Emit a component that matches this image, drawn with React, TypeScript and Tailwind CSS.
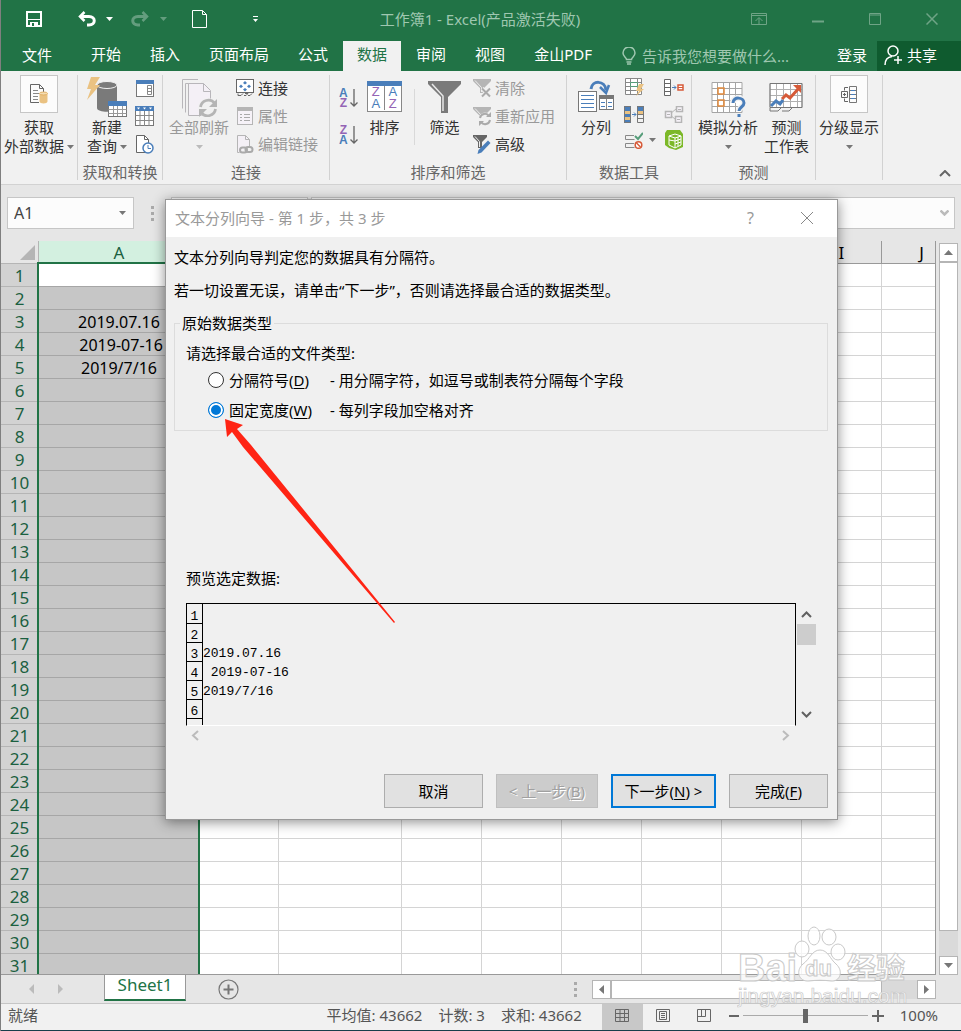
import React, { useState } from "react";

// columns B to H lie under the wizard, so they carry no caption
const columns = [
  { id: "A", caption: "A" },
  { id: "B", caption: "" },
  { id: "C", caption: "" },
  { id: "D", caption: "" },
  { id: "E", caption: "" },
  { id: "F", caption: "" },
  { id: "G", caption: "" },
  { id: "H", caption: "" },
  { id: "I", caption: "I" },
  { id: "J", caption: "J" },
];
const rows = Array.from({ length: 31 }, (_, i) => i + 1);
const cellData: Record<number, string> = {
  3: "2019.07.16",
  4: " 2019-07-16",
  5: "2019/7/16",
};

/* ---------- small shared pieces ---------- */

const Caret = ({ className = "fill-[#777]" }: { className?: string }) => (
  <svg width="7" height="4" viewBox="0 0 7 4" className={className}>
    <path d="M0 0h7L3.5 4z" />
  </svg>
);

const Dots = () => (
  <svg width="3" height="15" viewBox="0 0 3 15" fill="#aaa">
    <path d="M0 0h3v3H0zM0 6h3v3H0zM0 12h3v3H0z" />
  </svg>
);

type GroupProps = { label: string; className: string; children: React.ReactNode };

const Group = ({ label, className, children }: GroupProps) => (
  <section className={`flex shrink-0 flex-col border-r border-[#d2d2d2] ${className}`}>
    <div className="flex h-[90px] items-start">{children}</div>
    <div className="h-[15px] text-center leading-[14px] text-[#666]">{label}</div>
  </section>
);

type BigButtonProps = {
  icon: React.ReactNode;
  lines: string[];
  caret?: "inline" | "below";
  disabled?: boolean;
  className?: string;
};

const BigButton = ({ icon, lines, caret, disabled, className = "" }: BigButtonProps) => (
  <button
    type="button"
    disabled={disabled}
    className={`flex shrink-0 flex-col items-center leading-[19px] whitespace-nowrap text-[#333] disabled:text-[#999] ${className}`}
  >
    <span className="flex h-[43px] items-start justify-center">{icon}</span>
    {lines.map((line, i) => (
      <span key={line} className="flex items-center gap-[3px]">
        {line}
        {caret === "inline" && i === lines.length - 1 && <Caret />}
      </span>
    ))}
    {caret === "below" && (
      <span className="flex h-[19px] items-center">
        <Caret className={disabled ? "fill-[#bbb]" : "fill-[#777]"} />
      </span>
    )}
  </button>
);

type SmallButtonProps = { icon: React.ReactNode; label: string; disabled?: boolean };

const SmallButton = ({ icon, label, disabled }: SmallButtonProps) => (
  <button
    type="button"
    disabled={disabled}
    className="flex h-7 items-center gap-1 pb-[2px] whitespace-nowrap text-[#333] disabled:text-[#999]"
  >
    {icon}
    {label}
  </button>
);

type IconButtonProps = { label: string; className?: string; children: React.ReactNode };

const IconButton = ({ label, className = "", children }: IconButtonProps) => (
  <button type="button" aria-label={label} className={`flex items-center ${className}`}>
    {children}
  </button>
);

/* ---------- ribbon icons ---------- */

const ExternalDataIcon = () => (
  <span className="flex size-[38px] items-center justify-center border border-[#c6c6c6] bg-[#fcfcfc]">
    <svg width="18" height="20" viewBox="0 0 18 20" fill="none">
      <path d="M9 18.500H.5V.5h9l4 4V8M9.500 .5v4h4" stroke="#666" />
      <path d="M3 6.500h5M3 9.500h6M3 12.500h5M3 15.500h5" stroke="#888" />
      <path d="M9.500 9.500v8c0 2.500 8 2.500 8 0v-8z" fill="#eac282" />
      <ellipse cx="13.500" cy="9.500" rx="4" ry="1.500" fill="#f4dcb2" stroke="#e2b063" />
    </svg>
  </span>
);

const NewQueryIcon = () => (
  <svg width="42" height="42" viewBox="0 0 42 42" className="shrink-0">
    <path d="M11 10v23c0 5 20 5 20 0V10z" fill="#7a7a7a" />
    <ellipse cx="21" cy="10" rx="10" ry="3.500" fill="#7a7a7a" stroke="#f1f1f1" />
    <path d="M5 2h9l-5 8h5L1 25l4-11H1z" fill="#eac282" />
    <rect x="22.500" y="26.500" width="18" height="15" fill="#fff" stroke="#777" />
    <path d="M22 26h19v5H22z" fill="#4a7eba" />
    <path d="M22.500 34.500h18M22.500 38.500h18M27.500 31v10M31.500 31v10M36.500 31v10" stroke="#999" />
  </svg>
);

const ShowQueriesIcon = () => (
  <svg width="18" height="17" viewBox="0 0 18 17" fill="none">
    <rect x=".5" y=".5" width="17" height="16" fill="#fff" stroke="#777" />
    <path d="M0 0h18v4H0z" fill="#4a7eba" />
    <path d="M11.500 5.500h4v9h-4z M12 8.500h3M12 11.500h3" stroke="#888" />
  </svg>
);

const FromTableIcon = () => (
  <svg width="19" height="20" viewBox="0 0 19 20" fill="none">
    <rect x=".5" y=".5" width="18" height="19" fill="#fff" stroke="#777" />
    <path d="M0 0h19v5H0z" fill="#4a7eba" />
    <path d="M2 1.500h3l-1.500 2zM8 1.500h3l-1.500 2zM14 1.500h3l-1.500 2z" fill="#fff" />
    <path d="M.5 9.500h18M.5 14.500h18M5 5v15M9.500 5v15M14 5v15" stroke="#888" />
  </svg>
);

const RecentIcon = () => (
  <svg width="19" height="20" viewBox="0 0 19 20" fill="none">
    <path d="M1.500 1.500h8l4 4v13h-12z" fill="#fff" stroke="#666" />
    <path d="M9.500 1.500v4h4" stroke="#666" />
    <circle cx="13" cy="14" r="5" fill="#fff" stroke="#4a7eba" strokeWidth="1.500" />
    <path d="M13 11v3.500h3" stroke="#4a7eba" />
  </svg>
);

const RefreshAllIcon = () => (
  <svg width="37" height="42" viewBox="0 0 37 42" fill="none" stroke="#b8b6ba">
    <path d="M17 4.500H1.500v29M20 8.500H4.500v29" fill="none" />
    <path d="M7.500 8.500h15l7 7v25h-22z" fill="#f4f0f6" />
    <path d="M22.500 8.500v8h7" />
    <circle cx="27" cy="33" r="10" fill="#f1f1f1" stroke="none" />
    <g strokeWidth="2.800" stroke="#b5b5b5">
      <path d="M19.500 32a8 8 0 0 1 14-4M34.500 34a8 8 0 0 1-14 4" />
    </g>
    <path d="M36 24v8h-8zM18 42v-8h8z" fill="#b5b5b5" stroke="none" />
  </svg>
);

const ConnectionsIcon = () => (
  <svg width="18" height="18" viewBox="0 0 18 18" fill="none">
    <rect x=".5" y=".5" width="17" height="13" fill="#fff" stroke="#666" />
    <path d="M9 2l2 2-2 1.500L7 4zM9 9l2 1.500-2 2-2-2zM5 5.500l2 2-2 1.500-2-1.500zM13 5.500l2 2-2 1.500-2-1.500z" fill="#4a7eba" />
    <path d="M2 14.500v2h3l2-2M9 14.500h3l-2 2H8M12 16.500h2l2-2" stroke="#666" />
  </svg>
);

const PropertiesIcon = () => (
  <svg width="18" height="18" viewBox="0 0 18 18" fill="none">
    <rect x="1.500" y=".5" width="15" height="17" fill="#f6f2f8" stroke="#b5b5b5" />
    <path d="M1 0h16v4H1z" fill="#b5b5b5" />
    <path d="M4 7.500h2M8 7.500h6M4 10.500h2M8 10.500h6M4 13.500h2M8 13.500h6" stroke="#aaa" />
  </svg>
);

const EditLinksIcon = () => (
  <svg width="18" height="19" viewBox="0 0 18 19" fill="none">
    <path d="M1.500 17.500V.5h8l4 4v8" fill="#f4f0f6" stroke="#b5b5b5" />
    <path d="M9.500 .5v4h4M1.500 17.500h2" stroke="#b5b5b5" />
    <g stroke="#aaa" strokeWidth="2">
      <rect x="4" y="12.500" width="7" height="5" rx="2.500" />
      <rect x="9.500" y="12" width="7" height="5" rx="2.500" />
    </g>
  </svg>
);

const SortArrowIcon = ({ top, bottom }: { top: string; bottom: string }) => (
  <span className="flex items-center gap-px">
    <span className="flex flex-col font-[Liberation_Sans] text-[12px] leading-[10px] font-bold">
      <span className={top === "A" ? "text-[#4a7eba]" : "text-[#9464b5]"}>{top}</span>
      <span className={bottom === "A" ? "text-[#4a7eba]" : "text-[#9464b5]"}>{bottom}</span>
    </span>
    <svg width="9" height="18" viewBox="0 0 9 18" fill="none" stroke="#666" strokeWidth="1.300">
      <path d="M5 0v17M1.500 13.500L5 17l3.500-3.500" />
    </svg>
  </span>
);

const SortIcon = () => (
  <span className="mt-[6px] flex w-[35px] flex-col border border-t-0 border-[#888] bg-white font-[Liberation_Sans] text-[13px] leading-[12px]">
    <span className="-mx-px h-[5px] bg-[#4a7eba]" />
    <span className="grid grid-cols-2 divide-x divide-[#888] pb-px text-center">
      <span className="flex flex-col">
        <span className="text-[#9464b5]">Z</span>
        <span className="text-[#4a7eba]">A</span>
      </span>
      <span className="flex flex-col">
        <span className="text-[#4a7eba]">A</span>
        <span className="text-[#9464b5]">Z</span>
      </span>
    </span>
  </span>
);

const FilterIcon = () => (
  <svg width="33" height="39" viewBox="0 0 33 39">
    <path d="M0 6h33v3L20 22v16h-7V22L0 9z" fill="#7a7a7a" />
    <path d="M4 9l11 12v15" fill="none" stroke="#e8e8e8" strokeWidth="1.500" />
  </svg>
);

const Funnel = ({ color }: { color: string }) => (
  <>
    <path d="M0 0h18v2l-7 7v5H7V9L0 2z" fill={color} />
    <path d="M2 1.500l6.500 7V13" fill="none" stroke="#eee" />
  </>
);

const ClearIcon = () => (
  <svg width="18" height="19" viewBox="0 0 18 19">
    <Funnel color="#b5b5b5" />
    <path d="M9 9.500l8 8M17 9.500l-8 8" stroke="#f1f1f1" strokeWidth="4" />
    <path d="M9 9.500l8 8M17 9.500l-8 8" stroke="#aaa" strokeWidth="2" />
  </svg>
);

const ReapplyIcon = () => (
  <svg width="18" height="19" viewBox="0 0 18 19" fill="none">
    <Funnel color="#b5b5b5" />
    <circle cx="12" cy="12" r="6.500" fill="#f1f1f1" />
    <path d="M7 11a5 5 0 0 1 9-2M17 13a5 5 0 0 1-9 2" stroke="#aaa" strokeWidth="2" />
    <path d="M18 5v5h-5zM6 19v-5h5z" fill="#aaa" />
  </svg>
);

const AdvancedIcon = () => (
  <svg width="18" height="19" viewBox="0 0 18 19">
    <path d="M0 0h14v2L9 7v6H5V7L0 2z" fill="#666" />
    <path d="M2 1.500l4.500 5V12" fill="none" stroke="#eee" />
    <path d="M5.500 15L15 5.500l2.500 2.500L8.500 17.500 4.500 19z" fill="#4a7eba" />
  </svg>
);

const TextToColumnsIcon = () => (
  <svg width="36" height="39" viewBox="0 0 36 39" fill="none">
    <rect x=".5" y="16.500" width="18" height="20" fill="#fff" stroke="#777" />
    <path d="M3 20.500h13M3 24.500h13M3 28.500h13M3 32.500h13" stroke="#4a7eba" />
    <rect x="21.500" y="20.500" width="14" height="14" fill="#fff" stroke="#777" />
    <path d="M21 20h15v4H21z" fill="#777" />
    <path d="M28.500 24v10" stroke="#888" />
    <path d="M23 27.500h4M23 31.500h4M30 27.500h4M30 31.500h4" stroke="#4a7eba" />
    <path d="M13 14c1-9 14-9 15 1" stroke="#4a7eba" strokeWidth="3" />
    <path d="M22 12l6 6 3-8" stroke="#4a7eba" strokeWidth="2.500" />
  </svg>
);

const FlashFillIcon = () => (
  <svg width="20" height="18" viewBox="0 0 20 18" fill="none">
    <path d="M1.500 .5h16v16h-16zM1.500 4.500h16M1.500 8.500h16M1.500 12.500h16M6.500 .5v16M13.500 .5v16" fill="#fff" stroke="#888" />
    <path d="M6.500 4.500h7v4h-7z" fill="#fff" stroke="#569d7a" />
    <path d="M15 6h5l-3 5h3l-8 7 3-5h-3z" fill="#eac282" />
  </svg>
);

const RemoveDuplicatesIcon = () => (
  <svg width="20" height="17" viewBox="0 0 20 17" fill="none">
    <path d="M0 0h7v17H0zM13 0h7v5h-7z" fill="#4a7eba" />
    <path d="M1 5h5v3H1zM1 11h5v3H1zM14 5h5v3h-5z" fill="#eac282" />
    <path d="M13.500 .5h6v16h-6zM13.500 8.500h6M13.500 12.500h6M.5 .5h6v16h-6z" stroke="#777" />
    <path d="M8 8.500h4M10 6.500l2 2-2 2" stroke="#4a7eba" />
  </svg>
);

const ValidationIcon = () => (
  <svg width="19" height="17" viewBox="0 0 19 17" fill="none">
    <path d="M10 3.500H1.500v4h9M10 11.500H1.500v4h9" stroke="#888" />
    <path d="M11 4l3 3 5-6" stroke="#569d7a" strokeWidth="2" />
    <circle cx="14.500" cy="13" r="3.300" fill="#fff" stroke="#d65a38" strokeWidth="1.500" />
    <path d="M12.500 11l4 4" stroke="#d65a38" strokeWidth="1.500" />
  </svg>
);

const ConsolidateIcon = () => (
  <svg width="20" height="17" viewBox="0 0 20 17" fill="none">
    <path d="M.5 .5h6v16h-6zM.5 4.500h6M.5 8.500h6M.5 12.500h6" fill="#fff" stroke="#666" />
    <path d="M8 8.500h4M10 6.500l2 2-2 2" stroke="#4a7eba" />
    <path d="M14 6h5v5h-5z" fill="#fff" stroke="#d65a38" strokeWidth="1.500" />
    <path d="M14 8.500h5" stroke="#d65a38" />
  </svg>
);

const RelationshipsIcon = () => (
  <svg width="20" height="17" viewBox="0 0 20 17" fill="none" stroke="#b5b5b5">
    <path d="M6 8l6-5M6 9l5 4" />
    <path d="M1.500 5.500h6v6h-6zM12.500 .5h6v5h-6zM11.500 10.500h6v6h-6z" fill="#f6f2f8" strokeWidth="1.500" />
    <path d="M3 8.500h3M14 3.500h3M13 13.500h3" />
  </svg>
);

const DataModelIcon = () => (
  <svg width="20" height="20" viewBox="0 0 20 20" fill="none">
    <path d="M3 0h13l3 4v13l-7 3-7-2-4-3V3z" fill="#7cb828" />
    <path d="M5 6l6-2 6 2v9l-6 3-6-3zM11 8v10M5 6l6 2 6-2M14 7v9M11 11l6-2M11 14l6-2M5 10l6 1" stroke="#fff" />
  </svg>
);

const WhatIfIcon = () => (
  <svg width="35" height="42" viewBox="0 0 35 42" fill="none">
    <path d="M1 7.500h30v30H1zM1 13.500h30M1 19.500h30M1 25.500h30M1 31.500h30M6.500 7.500v30M12.500 7.500v30M18.500 7.500v30M24.500 7.500v30" fill="#fff" stroke="#a5a5a5" />
    <path d="M7 13h6v6H7zM7 25h6v6H7z" stroke="#e28a3d" strokeWidth="1.500" />
    <path d="M22 28c0-7 11-6 11 0 0 4-5 4-5 8" stroke="#f1f1f1" strokeWidth="6" />
    <path d="M22 28c0-7 11-6 11 0 0 4-5 4-5 8M28 39v3" stroke="#4a7eba" strokeWidth="3" />
  </svg>
);

const ForecastIcon = () => (
  <svg width="35" height="38" viewBox="0 0 35 38" fill="none">
    <path d="M1 8.500h32v24H1zM1 14.500h32M1 20.500h32M1 26.500h32M7.500 8.500v24M14.500 8.500v24M21.500 8.500v24M28.500 8.500v24" fill="#fff" stroke="#b0b0b0" />
    <path d="M1 8.500h32v24H1zM1 33v3h8l3-3M13 36h7l3-3" stroke="#777" />
    <path d="M2 31l5-5 4 3 3-4" stroke="#4a7eba" strokeWidth="3" />
    <path d="M13 24l4-4 4 3 9-10" stroke="#d65a38" strokeWidth="3" />
    <path d="M24 10h8v8z" fill="#d65a38" />
  </svg>
);

const OutlineIcon = () => (
  <span className="flex size-[38px] items-center justify-center border border-[#c6c6c6] bg-[#fcfcfc]">
    <svg width="17" height="17" viewBox="0 0 17 17" fill="none">
      <path d="M8.500 .5h7v16h-7zM8.500 4.500h7M8.500 8.500h7M8.500 12.500h7" stroke="#777" />
      <path d="M10 4.500h4M10 8.500h4M10 12.500h4" stroke="#4a7eba" />
      <path d="M7 1.500H3.500v3M7 15.500H3.500v-3M.5 5.500h6v6h-6zM2 8.500h3M3.500 7v3" stroke="#666" />
    </svg>
  </span>
);

/* ---------- window sections ---------- */

const TitleBar = () => (
  <header className="flex h-[41px] items-center bg-[#217346] pb-[3px] text-white">
    <div className="flex flex-1 items-center pl-[25px]">
      <IconButton label="保存">
        <svg width="16" height="16" viewBox="0 0 16 16" fill="none" stroke="#fff">
          <path d="M1 1h14v14H1z" strokeWidth="2" />
          <path d="M2 8.500h12" />
          <path d="M4 11h8v5H4z" fill="#fff" stroke="none" />
          <path d="M6 12h2v3H6z" fill="#217346" stroke="none" />
        </svg>
      </IconButton>
      <IconButton label="撤消" className="ml-9 gap-[10px]">
        <svg width="18" height="16" viewBox="0 0 18 16" fill="none" stroke="#fff">
          <path d="M3 5.500h8c7 0 7 8.500 0 8.500H9" strokeWidth="3" />
          <path d="M6.500 1L2 5.500 6.500 10" strokeWidth="2.500" />
        </svg>
        <Caret className="fill-white" />
      </IconButton>
      <IconButton label="恢复" className="ml-[18px] gap-[11px] opacity-30">
        <svg width="18" height="16" viewBox="0 0 18 16" fill="none" stroke="#fff">
          <path d="M15 5.500H7c-7 0-7 8.500 0 8.500h2" strokeWidth="3" />
          <path d="M11.500 1L16 5.500 11.500 10" strokeWidth="2.500" />
        </svg>
        <Caret className="fill-white" />
      </IconButton>
      <IconButton label="新建" className="ml-[25px]">
        <svg width="15" height="18" viewBox="0 0 15 18" fill="none" stroke="#fff">
          <path d="M.5 .5h10l4 4v13H.5zM10.500 .5v4h4" />
        </svg>
      </IconButton>
      <IconButton label="自定义快速访问工具栏" className="ml-[46px]">
        <svg width="5" height="6" viewBox="0 0 5 6" fill="#fff">
          <path d="M0 0h5v1H0zM0 3h5L2.500 6z" />
        </svg>
      </IconButton>
    </div>
    <h1 className="mr-1 text-[#9fc7b0]">工作簿1 - Excel(产品激活失败)</h1>
    <div className="flex flex-1 items-center justify-end gap-[45px] pr-[23px]">
      <IconButton label="功能区显示选项">
        <svg width="16" height="12" viewBox="0 0 16 12" fill="none" stroke="#6fa486">
          <path d="M.5 .5h15v11H.5zM.5 2.500h15M8 11V5M4.500 8L8 4.500 11.500 8" />
        </svg>
      </IconButton>
      <IconButton label="最小化">
        <svg width="12" height="12" viewBox="0 0 12 12" stroke="#6fa486">
          <path d="M0 8.500h12" strokeWidth="2" />
        </svg>
      </IconButton>
      <IconButton label="最大化">
        <svg width="12" height="12" viewBox="0 0 12 12" fill="none" stroke="#6fa486">
          <path d="M.5 .5h11v11H.5zM.5 2h11" />
        </svg>
      </IconButton>
      <IconButton label="关闭">
        <svg width="12" height="12" viewBox="0 0 12 12" stroke="#6fa486" strokeWidth="1.500">
          <path d="M.5 .5l11 11M11.500 .5l-11 11" />
        </svg>
      </IconButton>
    </div>
  </header>
);

const tabs = ["开始", "插入", "页面布局", "公式", "数据", "审阅", "视图", "金山PDF"];

const TabBar = () => (
  <nav className="flex h-[30px] items-stretch bg-[#217346] whitespace-nowrap text-white">
    <button type="button" className="mr-[25px] pb-[2px] pl-[21px]">
      文件
    </button>
    <div className="flex gap-px">
      {tabs.map((tab) => (
        <button
          key={tab}
          type="button"
          className={
            tab === "数据" ? "bg-[#f1f1f1] px-[14px] pb-[3px] text-[#217346]" : "px-[14px] pb-[3px]"
          }
        >
          {tab}
        </button>
      ))}
    </div>
    <button type="button" className="ml-4 flex items-center gap-[6px] text-[#9fc7b0]">
      <svg width="14" height="18" viewBox="0 0 14 18" fill="none" stroke="#9fc7b0" strokeWidth="1.500">
        <path d="M4.500 12.500c0-2-3.500-3-3.500-6.500a6 6 0 0 1 12 0c0 3.500-3.500 4.500-3.500 6.500zM4.500 15h5M5 17h4" />
      </svg>
      告诉我您想要做什么...
    </button>
    <div className="flex flex-1 justify-end">
      <button type="button" className="px-[10px] pb-[2px]">
        登录
      </button>
      <button type="button" className="flex w-[84px] items-center gap-1 bg-[#0f5b2f] pb-[2px] pl-[7px]">
        <svg width="19" height="20" viewBox="0 0 19 20" fill="none" stroke="#fff" strokeWidth="1.500">
          <circle cx="9" cy="6" r="5" />
          <path d="M1 20c0-5 3-8 7-8.500M14 11v8M10 15h8" />
        </svg>
        共享
      </button>
    </div>
  </nav>
);

const Ribbon = () => (
  <div className="flex border-b border-[#d2d2d2] bg-[#f1f1f1] py-1">
    <Group label="" className="w-[77px]">
      <BigButton
        icon={<ExternalDataIcon />}
        lines={["获取", "外部数据"]}
        caret="inline"
        className="ml-[3px]"
      />
    </Group>
    <Group label="获取和转换" className="w-[85px]">
      <BigButton icon={<NewQueryIcon />} lines={["新建", "查询"]} caret="inline" className="ml-2 w-[42px]" />
      <div className="ml-[7px] flex flex-col items-center">
        <IconButton label="显示查询" className="h-7 pb-[2px]">
          <ShowQueriesIcon />
        </IconButton>
        <IconButton label="从表格" className="h-7 pb-[2px]">
          <FromTableIcon />
        </IconButton>
        <IconButton label="最近使用的源" className="h-7 pb-[2px]">
          <RecentIcon />
        </IconButton>
      </div>
    </Group>
    <Group label="连接" className="w-[167px]">
      <BigButton icon={<RefreshAllIcon />} lines={["全部刷新"]} caret="below" disabled className="ml-[6px]" />
      <div className="ml-[7px] flex flex-col items-start">
        <SmallButton icon={<ConnectionsIcon />} label="连接" />
        <SmallButton icon={<PropertiesIcon />} label="属性" disabled />
        <SmallButton icon={<EditLinksIcon />} label="编辑链接" disabled />
      </div>
    </Group>
    <Group label="排序和筛选" className="w-[237px]">
      <div className="ml-[9px] flex w-[18px] flex-col gap-[17px] pt-[13px]">
        <IconButton label="升序">
          <SortArrowIcon top="A" bottom="Z" />
        </IconButton>
        <IconButton label="降序">
          <SortArrowIcon top="Z" bottom="A" />
        </IconButton>
      </div>
      <BigButton icon={<SortIcon />} lines={["排序"]} className="ml-[10px] w-[35px]" />
      <div className="mt-[14px] ml-3 h-14 border-l border-[#d9d9d9]" />
      <BigButton icon={<FilterIcon />} lines={["筛选"]} className="ml-[13px] w-[33px]" />
      <div className="ml-3 flex flex-col items-start">
        <SmallButton icon={<ClearIcon />} label="清除" disabled />
        <SmallButton icon={<ReapplyIcon />} label="重新应用" disabled />
        <SmallButton icon={<AdvancedIcon />} label="高级" />
      </div>
    </Group>
    <Group label="数据工具" className="w-[125px]">
      <BigButton icon={<TextToColumnsIcon />} lines={["分列"]} className="ml-[11px] w-9" />
      <div className="ml-[10px] flex w-8 flex-col">
        <IconButton label="快速填充" className="h-[26px] pb-[2px]">
          <FlashFillIcon />
        </IconButton>
        <IconButton label="删除重复项" className="h-[26px]">
          <RemoveDuplicatesIcon />
        </IconButton>
        <IconButton label="数据验证" className="h-[26px] gap-[6px]">
          <ValidationIcon />
          <Caret />
        </IconButton>
      </div>
      <div className="ml-2 flex flex-col">
        <IconButton label="合并计算" className="h-[26px] pb-[2px]">
          <ConsolidateIcon />
        </IconButton>
        <IconButton label="关系" className="h-[26px]">
          <RelationshipsIcon />
        </IconButton>
        <IconButton label="管理数据模型" className="h-[26px]">
          <DataModelIcon />
        </IconButton>
      </div>
    </Group>
    <Group label="预测" className="w-[124px]">
      <BigButton icon={<WhatIfIcon />} lines={["模拟分析"]} caret="below" className="ml-[6px]" />
      <BigButton icon={<ForecastIcon />} lines={["预测", "工作表"]} className="ml-[6px]" />
    </Group>
    <Group label="" className="w-[67px]">
      <BigButton icon={<OutlineIcon />} lines={["分级显示"]} caret="below" className="ml-[3px]" />
    </Group>
    <div className="flex flex-1 items-end justify-end pr-[10px] pb-[3px]">
      <IconButton label="折叠功能区">
        <svg width="12" height="7" viewBox="0 0 12 7" fill="none" stroke="#666" strokeWidth="2">
          <path d="M1 6l5-5 5 5" />
        </svg>
      </IconButton>
    </div>
  </div>
);

const FormulaBar = () => (
  <div className="flex h-14 items-center bg-[#e6e6e6] px-[6px]">
    <div className="flex h-8 w-[127px] items-center border border-[#c6c6c6] bg-[#fcfcfc] pr-[7px] pl-[6px]">
      <input aria-label="名称框" defaultValue="A1" className="min-w-0 flex-1 text-base text-[#444] outline-none" />
      <Caret className="fill-[#777]" />
    </div>
    <div className="ml-[17px] flex w-5 items-center">
      <Dots />
    </div>
    <div className="h-8 w-[137px] border border-[#c6c6c6] bg-[#fcfcfc]" />
    <div className="ml-[3px] flex h-8 flex-1 items-center border border-[#c6c6c6] bg-[#fcfcfc] pr-[5px]">
      <input aria-label="编辑栏" className="min-w-0 flex-1 outline-none" />
      <svg width="9" height="6" viewBox="0 0 9 6" fill="none" stroke="#bbb" strokeWidth="2.500">
        <path d="M.5 .5l4 4 4-4" />
      </svg>
    </div>
  </div>
);

const Sheet = () => (
  <div className="flex min-h-0 flex-1 bg-[#e6e6e6]">
    <div className="relative min-w-0 flex-1 overflow-hidden border-r border-b border-[#999] bg-white">
      <table className="w-[961px] table-fixed border-separate border-spacing-0 text-base leading-[20px]">
        <colgroup>
          <col className="w-[38px]" />
          <col className="w-[160px]" />
          <col className="w-[80px]" />
          <col className="w-[123px]" />
          {columns.slice(3).map((c) => (
            <col key={c.id} className="w-[80px]" />
          ))}
        </colgroup>
        <thead>
          <tr className="h-[23px] bg-[#e6e6e6]">
            <th className="border-r border-b border-[#b5b5b5] p-0">
              <svg width="15" height="15" viewBox="0 0 15 15" className="mr-[3px] ml-auto fill-[#b5b5b5]">
                <path d="M15 0v15H0z" />
              </svg>
            </th>
            {columns.map((c) => (
              <th
                key={c.id}
                className={
                  c.id === "A"
                    ? "border-b border-[#999] bg-[#d3f0e0] p-0 pt-[2px] text-[17px] font-normal text-[#1b6040]"
                    : "border-r border-b border-[#999] p-0 pt-[2px] text-[17px] font-normal text-black"
                }
              >
                {c.caption}
              </th>
            ))}
          </tr>
        </thead>
        <tbody>
          {rows.map((r) => (
            <tr key={r} className="h-[23px]">
              <th className="border-r border-b border-[#b5b5b5] bg-[#d2d2d2] p-0 pt-[2px] text-[17px] font-normal text-[#1b6040]">
                {r}
              </th>
              {columns.map((c) => (
                <td
                  key={c.id}
                  className={
                    c.id !== "A"
                      ? "border-r border-b border-[#d4d4d4] p-0"
                      : r === 1
                        ? "border-b border-[#a6a6a6] bg-white p-0"
                        : "border-b border-[#a6a6a6] bg-[#c6c6c6] p-0 pt-[2px] text-center whitespace-pre text-black"
                  }
                >
                  {c.id === "A" ? cellData[r] : null}
                </td>
              ))}
            </tr>
          ))}
        </tbody>
      </table>
      {/* selection outline */}
      <div className="pointer-events-none absolute top-[21px] bottom-0 left-9 w-[163px] border-2 border-b-0 border-[#217346]" />
    </div>
    <div className="mx-[3px] mt-[2px] flex w-[19px] flex-col bg-[#dadada]">
      <button type="button" aria-label="向上滚动" className="flex h-[19px] items-center justify-center border border-[#b5b5b5] bg-white">
        <svg width="9" height="5" viewBox="0 0 9 5" fill="#777">
          <path d="M0 5h9L4.500 0z" />
        </svg>
      </button>
      <div className="mb-[25px] flex-1 border border-[#b5b5b5] bg-white" />
      <button type="button" aria-label="向下滚动" className="flex h-[19px] items-center justify-center border border-[#b5b5b5] bg-white">
        <svg width="9" height="5" viewBox="0 0 9 5" fill="#777">
          <path d="M0 0h9L4.500 5z" />
        </svg>
      </button>
    </div>
  </div>
);

const SheetTabs = () => (
  <div className="flex h-[28px] items-center bg-[#e6e6e6]">
    <div className="flex w-[103px] items-center gap-[24px] pl-7">
      <svg width="5" height="10" viewBox="0 0 5 10" fill="#bbb">
        <path d="M5 0v10L0 5z" />
      </svg>
      <svg width="5" height="10" viewBox="0 0 5 10" fill="#bbb">
        <path d="M0 0v10l5-5z" />
      </svg>
    </div>
    <button
      type="button"
      className="h-[26px] w-[82px] self-start border-x border-b-2 border-x-[#999] border-b-[#217346] bg-white pb-1 text-[17px] leading-[20px] text-[#217346]"
    >
      Sheet1
    </button>
    <button type="button" aria-label="新工作表" className="ml-8">
      <svg width="21" height="21" viewBox="0 0 21 21" fill="none" stroke="#777">
        <circle cx="10.500" cy="10.500" r="9.500" strokeWidth="1.200" />
        <path d="M10.500 5.500v10M5.500 10.500h10" strokeWidth="2" />
      </svg>
    </button>
    <div className="flex flex-1 items-center justify-end pr-[25px]">
      <Dots />
      <div className="ml-[15px] flex h-[19px] w-[344px] bg-[#dadada]">
        <button type="button" aria-label="向左滚动" className="flex w-[19px] items-center justify-center border border-[#b5b5b5] bg-white">
          <svg width="5" height="9" viewBox="0 0 5 9" fill="#777">
            <path d="M5 0v9L0 4.500z" />
          </svg>
        </button>
        <div className="mr-[35px] flex-1 border border-[#b5b5b5] bg-white" />
        <button type="button" aria-label="向右滚动" className="flex w-[19px] items-center justify-center border border-[#b5b5b5] bg-white">
          <svg width="5" height="9" viewBox="0 0 5 9" fill="#777">
            <path d="M0 0v9l5-4.500z" />
          </svg>
        </button>
      </div>
    </div>
  </div>
);

const StatusBar = () => (
  <footer className="flex h-[28px] items-center border-t border-b border-t-[#c6c6c6] border-b-[#173f4a] bg-[#f1f1f1] pl-[7px] whitespace-nowrap text-[#555]">
    <div className="flex flex-1 gap-4 pr-5 pb-[3px]">
      <span className="flex-1">就绪</span>
      <span>平均值: 43662</span>
      <span>计数: 3</span>
      <span>求和: 43662</span>
    </div>
    <button type="button" aria-label="普通" className="flex h-full w-[41px] items-center justify-center bg-[#c8c8c8] pb-[3px]">
      <svg width="14" height="13" viewBox="0 0 14 13" fill="none" stroke="#666">
        <path d="M.5 .5h13v12H.5zM.5 4.500h13M.5 8.500h13M5 .5v12M9.500 .5v12" />
      </svg>
    </button>
    <div className="flex items-center pr-[23px] pb-[3px]">
      <button type="button" aria-label="页面布局" className="flex w-[41px] justify-center">
        <svg width="14" height="13" viewBox="0 0 14 13" fill="none" stroke="#666">
          <path d="M.5 .5h13v12H.5zM3.500 2.500h7v8h-7zM5 4.500h4M5 6.500h4M5 8.500h4" />
        </svg>
      </button>
      <button type="button" aria-label="分页预览" className="flex w-[41px] justify-center">
        <svg width="14" height="13" viewBox="0 0 14 13" fill="none" stroke="#666">
          <path d="M.5 .5h13v12H.5zM.5 7.500h8v-7M4.500 .5v7" />
        </svg>
      </button>
      <button type="button" aria-label="缩小" className="ml-1">
        <svg width="10" height="10" viewBox="0 0 10 10" stroke="#666" strokeWidth="2">
          <path d="M0 5h10" />
        </svg>
      </button>
      <input
        type="range"
        aria-label="显示比例"
        min={0}
        max={200}
        defaultValue={100}
        className="mx-1 h-[14px] w-[125px] appearance-none bg-[linear-gradient(#aaa,#aaa)] bg-[length:100%_1px] bg-center bg-no-repeat [&::-webkit-slider-thumb]:h-[14px] [&::-webkit-slider-thumb]:w-[5px] [&::-webkit-slider-thumb]:appearance-none [&::-webkit-slider-thumb]:bg-[#666]"
      />
      <button type="button" aria-label="放大">
        <svg width="12" height="12" viewBox="0 0 12 12" stroke="#666" strokeWidth="2">
          <path d="M0 6h12M6 0v12" />
        </svg>
      </button>
      <span className="ml-4">100%</span>
    </div>
  </footer>
);

/* ---------- wizard dialog ---------- */

const previewRows = [
  { n: 1, text: "" },
  { n: 2, text: "" },
  { n: 3, text: "2019.07.16" },
  { n: 4, text: " 2019-07-16" },
  { n: 5, text: "2019/7/16" },
  { n: 6, text: "" },
];

const dataTypes = [
  { id: "delimited", label: "分隔符号", hotkey: "D", hint: "- 用分隔字符，如逗号或制表符分隔每个字段" },
  { id: "fixed", label: "固定宽度", hotkey: "W", hint: "- 每列字段加空格对齐" },
];

const dialogButton = "h-[34px] border border-[#adadad] bg-[#e1e1e1]";

const WizardDialog = () => {
  const [dataType, setDataType] = useState("fixed");

  return (
    <div
      role="dialog"
      aria-label="文本分列向导"
      className="absolute top-[199px] left-[164px] w-[673px] border border-[#999] bg-[#f0f0f0] leading-[22px] text-black shadow-[0_2px_12px_rgba(0,0,0,0.45)]"
    >
      <div className="flex h-[37px] items-center bg-white pr-[23px] pb-[2px] pl-[9px] text-[#999]">
        <h2 className="flex-1">文本分列向导 - 第 1 步，共 3 步</h2>
        <button type="button" aria-label="帮助" className="mr-[46px] text-base">
          ?
        </button>
        <button type="button" aria-label="关闭对话框">
          <svg width="14" height="14" viewBox="0 0 14 14" stroke="#888">
            <path d="M1 1l12 12M13 1L1 13" />
          </svg>
        </button>
      </div>

      <div className="pt-[9px] pr-[9px] pb-[11px] pl-2">
        <p>文本分列向导判定您的数据具有分隔符。</p>
        <p className="mt-[11px]">若一切设置无误，请单击“下一步”，否则请选择最合适的数据类型。</p>

        <fieldset className="mt-[11px] border border-[#dcdcdc] pb-[9px] pl-[5px]">
          <legend className="px-[2px]">原始数据类型</legend>
          <div className="mt-2 pl-[6px]">
            <p>请选择最合适的文件类型:</p>
            {dataTypes.map((t, i) => (
              <div key={t.id} className={i === 0 ? "mt-[5px] flex pl-[22px]" : "mt-2 flex pl-[22px]"}>
                <label className="flex w-[122px] items-center gap-[5px]">
                  <input
                    type="radio"
                    name="dataType"
                    checked={dataType === t.id}
                    onChange={() => setDataType(t.id)}
                    className="size-4 appearance-none rounded-full border border-[#333] bg-white checked:border-[#0078d7] checked:bg-[#0078d7] checked:shadow-[inset_0_0_0_2px_white]"
                  />
                  <span>
                    {t.label}(<u className="underline-offset-2">{t.hotkey}</u>)
                  </span>
                </label>
                <span>{t.hint}</span>
              </div>
            ))}
          </div>
        </fieldset>

        <p className="mt-[136px] pl-3">预览选定数据:</p>
        <div className="mt-[14px] flex pl-3">
          <div className="h-[123px] w-[610px] overflow-hidden border border-black border-b-white font-[Liberation_Mono,monospace] text-[13px]">
            <table className="w-full border-separate border-spacing-0">
              <tbody>
                {previewRows.map((row) => (
                  <tr key={row.n} className="h-[19px] first:h-5">
                    <th className="w-4 border-r border-b border-black p-0 align-bottom leading-[12px] font-normal">
                      {row.n}
                    </th>
                    <td className="p-0 pt-[2px] leading-[17px] whitespace-pre">{row.text}</td>
                  </tr>
                ))}
                <tr className="h-[19px]">
                  <th className="border-r border-black p-0" />
                  <td className="p-0" />
                </tr>
              </tbody>
            </table>
          </div>
          <div className="ml-px flex w-[19px] flex-col items-center pt-2">
            <svg width="11" height="7" viewBox="0 0 11 7" fill="none" stroke="#606060" strokeWidth="2">
              <path d="M1 6l4.500-4.500L10 6" />
            </svg>
            <div className="mt-[6px] h-[21px] w-full bg-[#cdcdcd]" />
            <svg width="11" height="7" viewBox="0 0 11 7" fill="none" stroke="#606060" strokeWidth="2" className="mt-auto mb-2">
              <path d="M1 1l4.500 4.500L10 1" />
            </svg>
          </div>
        </div>
        <div className="mt-1 flex w-[616px] justify-between pl-[17px]">
          <svg width="8" height="11" viewBox="0 0 8 11" fill="none" stroke="#bbb" strokeWidth="2">
            <path d="M7 1L2 5.500 7 10" />
          </svg>
          <svg width="8" height="11" viewBox="0 0 8 11" fill="none" stroke="#bbb" strokeWidth="2">
            <path d="M1 1l5 4.500L1 10" />
          </svg>
        </div>

        <div className="mt-[33px] flex justify-end gap-[13px]">
          <button type="button" className={`w-[99px] ${dialogButton}`}>
            取消
          </button>
          <button
            type="button"
            disabled
            className="h-[34px] w-[102px] border border-[#bfbfbf] bg-[#ccc] text-[#a0a0a0] text-shadow-[1px_1px_0_#fff]"
          >
            &lt; 上一步(<u className="underline-offset-2">B</u>)
          </button>
          <button type="button" className="h-[34px] w-[105px] border-2 border-[#0078d7] bg-[#e1e1e1]">
            下一步(<u className="underline-offset-2">N</u>) &gt;
          </button>
          <button type="button" className={`w-[99px] ${dialogButton}`}>
            完成(<u className="underline-offset-2">F</u>)
          </button>
        </div>
      </div>

      {/* arrow that points at the chosen radio */}
      <svg
        width="172"
        height="206"
        viewBox="0 0 172 206"
        className="pointer-events-none absolute top-[218px] left-[58px]"
      >
        <path d="M1 1l18 6-6 4 14 16 144 177-1 1L19 29 8 14l-5 5z" fill="#ff2414" />
      </svg>
    </div>
  );
};

const Watermark = () => (
  <svg
    width="180"
    height="86"
    viewBox="0 0 180 86"
    className="pointer-events-none absolute right-[44px] bottom-[20px]"
    fill="rgba(255,255,255,0.75)"
    stroke="#c9c9c9"
    fontFamily="Liberation Sans, Noto Sans CJK SC, sans-serif"
  >
    <ellipse cx="65" cy="24" rx="7" ry="8" />
    <ellipse cx="77" cy="11" rx="6" ry="9" />
    <ellipse cx="92" cy="12" rx="7" ry="8" />
    <ellipse cx="101" cy="27" rx="7" ry="8" />
    <path d="M83 25c8 0 10 9 16 14 8 7 4 18-5 17-8-1-14-1-22 0-10 1-14-10-6-17 7-5 9-14 17-14z" />
    <text x="1" y="56" fontSize="38" fontWeight="bold">
      Bai
    </text>
    <text x="68" y="51" fontSize="22" fontWeight="bold">
      du
    </text>
    <text x="110" y="54" fontSize="29" fontWeight="bold">
      经验
    </text>
    <text x="1" y="78" fontSize="21" strokeWidth=".7">
      jingyan.baidu.com
    </text>
  </svg>
);

const App = () => {
  return (
    <div className="relative flex h-screen flex-col overflow-hidden border-l border-[#7f7f7f] font-['Noto_Sans','Noto_Sans_CJK_SC',sans-serif] text-[15px]">
      <TitleBar />
      <TabBar />
      <Ribbon />
      <FormulaBar />
      <Sheet />
      <SheetTabs />
      <StatusBar />
      <WizardDialog />
      <Watermark />
    </div>
  );
};

export default App;
